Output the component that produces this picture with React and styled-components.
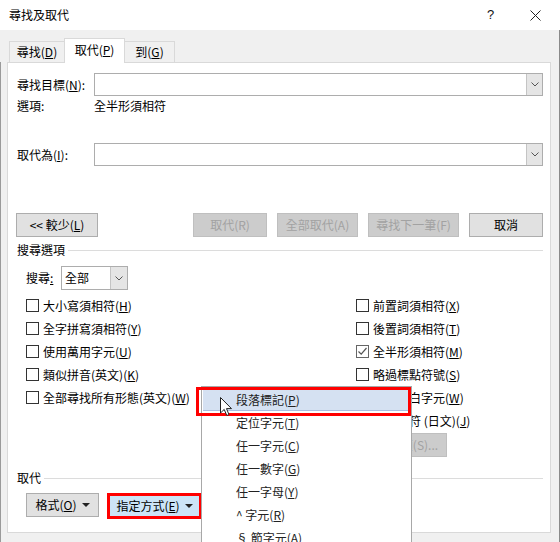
import styled, { createGlobalStyle } from "styled-components";

const GlobalStyle = createGlobalStyle`
    html, body {
        margin: 0;
        padding: 0;
    }
    body {
        font-family: "Noto Sans CJK TC", "Noto Sans", sans-serif;
        font-size: 12px;
        line-height: 16px;
        color: #000;
    }
`;

const Window = styled.div`
    position: relative;
    width: 560px;
    height: 542px;
    background: #f0f0f0;
    overflow: hidden;
    display: flex;
    flex-direction: column;

    &::before {
        content: "";
        position: absolute;
        left: 0;
        top: 62px;
        bottom: 0;
        width: 1px;
        background: #9a9a9a;
    }
    &::after {
        content: "";
        position: absolute;
        right: 0;
        top: 30px;
        bottom: 0;
        width: 1px;
        background: #8a8a8a;
    }
`;

const TitleBar = styled.div`
    height: 30px;
    flex-shrink: 0;
    background: #fff;
    display: flex;
    align-items: center;
    padding: 0 2px 0 9px;
    box-sizing: border-box;
`;

const Title = styled.div`
    flex: 1;
`;

const TitleButton = styled.div`
    width: 45px;
    height: 30px;
    display: flex;
    align-items: center;
    justify-content: center;
    font-family: "Liberation Sans", sans-serif;
    font-size: 13px;
    color: #111;
`;

const TabRow = styled.div`
    position: relative;
    z-index: 1;
    display: flex;
    align-items: flex-end;
    height: 25px;
    margin: 8px 0 0 9px;
`;

const Tab = styled.div`
    box-sizing: border-box;
    width: ${({$w}) => $w}px;
    height: ${({$active}) => $active ? 25 : 21}px;
    margin-bottom: ${({$active}) => $active ? 0 : 1}px;
    background: ${({$active}) => $active ? "#fff" : "#f0f0f0"};
    border: 1px solid #d9d9d9;
    border-bottom: none;
    display: flex;
    align-items: center;
    justify-content: center;
    padding-bottom: ${({$active}) => $active ? 2 : 0}px;

    & + & {
        margin-left: -1px;
    }
`;

const Panel = styled.div`
    position: relative;
    box-sizing: border-box;
    margin: -1px 0 0 7px;
    width: 544px;
    height: 471px;
    background: #fff;
    border: 1px solid #d9d9d9;
    padding: 0 7px 0 9px;
    display: flex;
    flex-direction: column;
`;

const FieldRow = styled.div`
    display: grid;
    grid-template-columns: 77px 1fr;
    align-items: center;
    height: ${({$h}) => $h ?? 23}px;
    margin-top: ${({$mt}) => $mt}px;
`;

const Combo = styled.div`
    box-sizing: border-box;
    height: 23px;
    border: 1px solid #adadad;
    background: #fff;
    display: flex;
    justify-content: flex-end;
`;

const ComboArrow = styled.div`
    box-sizing: border-box;
    width: ${({$w}) => $w ?? 16}px;
    height: 100%;
    background: #e5e5e5;
    border-left: 1px solid #c4c4c4;
    display: flex;
    align-items: center;
    justify-content: center;
`;

const ButtonsRow = styled.div`
    display: flex;
    gap: 10px;
    margin: 47px 0 0 -1px;
`;

const Button = styled.div`
    box-sizing: border-box;
    width: ${({$w}) => $w}px;
    height: ${({$h}) => $h ?? 24}px;
    margin-left: ${({$ml}) => $ml ?? 0}px;
    display: flex;
    align-items: center;
    justify-content: center;
    gap: 5px;
    flex-shrink: 0;
    white-space: nowrap;
    background: ${({$disabled}) => $disabled ? "#cccccc" : "#e1e1e1"};
    border: 1px solid ${({$disabled}) => $disabled ? "#bfbfbf" : "#adadad"};
    color: ${({$disabled}) => $disabled ? "#a2a2a2" : "#000"};
`;

const HighlightButton = styled(Button)`
    background: #cce4f7;
    border: 3px solid #ff0000;
`;

const Spacer = styled.div`
    flex: 1;
`;

const GroupHeading = styled.div`
    display: flex;
    align-items: center;
    gap: 3px;
    height: 16px;
    margin-top: ${({$mt}) => $mt}px;

    &::after {
        content: "";
        flex: 1;
        height: 1px;
        background: #dcdcdc;
    }
`;

const SearchRow = styled.div`
    display: flex;
    align-items: center;
    height: 24px;
    margin-top: 8px;
    padding-left: 9px;
`;

const SearchLabel = styled.span`
    width: 35px;
`;

const Select = styled.div`
    box-sizing: border-box;
    width: 67px;
    height: 24px;
    border: 1px solid #adadad;
    display: flex;
    align-items: center;
    padding-left: 3px;
`;

const SelectText = styled.span`
    flex: 1;
`;

const OptionsGrid = styled.div`
    display: flex;
    margin-top: 4px;
    padding-left: 9px;
`;

const Column = styled.div`
    display: flex;
    flex-direction: column;
    width: ${({$w}) => $w ? `${$w}px` : "auto"};
`;

const CheckRow = styled.div`
    display: flex;
    align-items: center;
    gap: 4px;
    height: 23px;
    white-space: nowrap;
`;

const Box = styled.span`
    box-sizing: border-box;
    width: 13px;
    height: 13px;
    border: 1px solid ${({$checked}) => $checked ? "#666" : "#333"};
    background: #fff;
    display: flex;
    align-items: center;
    justify-content: center;
`;

const BottomRow = styled.div`
    display: flex;
    align-items: flex-start;
    gap: 8px;
    margin-top: 7px;
    padding-left: 9px;
`;

const Menu = styled.div`
    position: absolute;
    left: 201px;
    top: 386px;
    width: 211px;
    height: 170px;
    box-sizing: border-box;
    background: #fff;
    border: 1px solid #a8a8a8;
    padding-top: 1px;
    z-index: 5;
`;

const MenuItem = styled.div`
    box-sizing: border-box;
    height: 23px;
    margin: 0 3px 0 1px;
    padding-left: 33px;
    display: flex;
    align-items: center;
    color: #222;
    background: ${({$active}) => $active ? "#d5e1f2" : "transparent"};
    box-shadow: ${({$active}) => $active ? "inset 0 -1px 0 #a9bfe2" : "none"};
`;

const RedFrame = styled.div`
    position: absolute;
    left: 196px;
    top: 387px;
    width: 215px;
    height: 29px;
    box-sizing: border-box;
    border: 3px solid #ff0000;
    z-index: 6;
`;

const Cursor = styled.svg`
    position: absolute;
    left: 220px;
    top: 397px;
    z-index: 7;
`;

const Mn = styled.u`
    text-decoration: underline;
    text-underline-offset: 1px;
`;

const Chevron = () => (
    <svg width="8" height="5" viewBox="0 0 8 5">
        <path d="M0.5 0.5 L4 4 L7.5 0.5" fill="none" stroke="#555" strokeWidth="1"/>
    </svg>
);

const Caret = () => (
    <svg width="8" height="4" viewBox="0 0 8 4">
        <path d="M0 0 L8 0 L4 4 Z" fill="#222"/>
    </svg>
);

const Check = ({ label, mn, checked }) => (
    <CheckRow>
        <Box $checked={checked}>
            {checked && (
                <svg width="11" height="11" viewBox="0 0 11 11">
                    <path d="M1.5 5.5 L4.2 8.2 L9.5 2" fill="none" stroke="#555" strokeWidth="1.2"/>
                </svg>
            )}
        </Box>
        <span>{label}(<Mn>{mn}</Mn>)</span>
    </CheckRow>
);

const leftOptions = [
    ["大小寫須相符", "H"],
    ["全字拼寫須相符", "Y"],
    ["使用萬用字元", "U"],
    ["類似拼音(英文)", "K"],
    ["全部尋找所有形態(英文)", "W"],
];

const rightOptions = [
    ["前置詞須相符", "X"],
    ["後置詞須相符", "T"],
    ["全半形須相符", "M", true],
    ["略過標點符號", "S"],
    ["略過空白字元", "W"],
    ["發音相符 (日文)", "J"],
];

const menuItems = [
    ["段落標記", "P"],
    ["定位字元", "T"],
    ["任一字元", "C"],
    ["任一數字", "G"],
    ["任一字母", "Y"],
    ["^ 字元", "R"],
    ["§ 節字元", "A"],
];

export default function App() {
    return (
        <>
            <GlobalStyle/>
            <Window>
                <TitleBar>
                    <Title>尋找及取代</Title>
                    <TitleButton>?</TitleButton>
                    <TitleButton>
                        <svg width="11" height="11" viewBox="0 0 11 11">
                            <path d="M0.5 0.5 L10.5 10.5 M10.5 0.5 L0.5 10.5" stroke="#222" strokeWidth="1"/>
                        </svg>
                    </TitleButton>
                </TitleBar>

                <TabRow>
                    <Tab $w={56}>尋找(<Mn>D</Mn>)</Tab>
                    <Tab $w={61} $active>取代(<Mn>P</Mn>)</Tab>
                    <Tab $w={51}>到(<Mn>G</Mn>)</Tab>
                </TabRow>

                <Panel>
                    <FieldRow $mt={10}>
                        <span>尋找目標(<Mn>N</Mn>):</span>
                        <Combo><ComboArrow><Chevron/></ComboArrow></Combo>
                    </FieldRow>
                    <FieldRow $mt={1} $h={18}>
                        <span>選項:</span>
                        <span>全半形須相符</span>
                    </FieldRow>
                    <FieldRow $mt={28}>
                        <span>取代為(<Mn>I</Mn>):</span>
                        <Combo><ComboArrow><Chevron/></ComboArrow></Combo>
                    </FieldRow>

                    <ButtonsRow>
                        <Button $w={82}><span>&lt;&lt; 較少(<Mn>L</Mn>)</span></Button>
                        <Spacer/>
                        <Button $w={74} $disabled>取代(R)</Button>
                        <Button $w={81} $disabled>全部取代(A)</Button>
                        <Button $w={91} $disabled>尋找下一筆(F)</Button>
                        <Button $w={74}>取消</Button>
                    </ButtonsRow>

                    <GroupHeading $mt={5}>搜尋選項</GroupHeading>

                    <SearchRow>
                        <SearchLabel>搜尋<Mn>:</Mn></SearchLabel>
                        <Select>
                            <SelectText>全部</SelectText>
                            <ComboArrow $w={17}><Chevron/></ComboArrow>
                        </Select>
                    </SearchRow>

                    <OptionsGrid>
                        <Column $w={330}>
                            {leftOptions.map(([label, mn]) => (
                                <Check key={label} label={label} mn={mn}/>
                            ))}
                        </Column>
                        <Column>
                            {rightOptions.map(([label, mn, checked]) => (
                                <Check key={label} label={label} mn={mn} checked={checked}/>
                            ))}
                            <Button $w={67} $ml={24} $disabled style={{ marginTop: 1 }}>選項(S)...</Button>
                        </Column>
                    </OptionsGrid>

                    <GroupHeading $mt={13}>取代</GroupHeading>

                    <BottomRow>
                        <Button $w={73}>
                            <span>格式(<Mn>O</Mn>)</span>
                            <Caret/>
                        </Button>
                        <HighlightButton $w={95} $h={26}>
                            <span>指定方式(<Mn>E</Mn>)</span>
                            <Caret/>
                        </HighlightButton>
                    </BottomRow>
                </Panel>

                <Menu>
                    {menuItems.map(([label, mn], i) => (
                        <MenuItem key={label} $active={i === 0}>
                            {label}(<Mn>{mn}</Mn>)
                        </MenuItem>
                    ))}
                </Menu>
                <RedFrame/>
                <Cursor width="13" height="20" viewBox="0 0 13 20">
                    <path d="M0.5 0.5 L0.5 16 L4.2 12.4 L6.8 18.5 L9 17.6 L6.5 11.6 L11.5 11.6 Z"
                          fill="#fff" stroke="#222" strokeWidth="1"/>
                </Cursor>
            </Window>
        </>
    );
}
